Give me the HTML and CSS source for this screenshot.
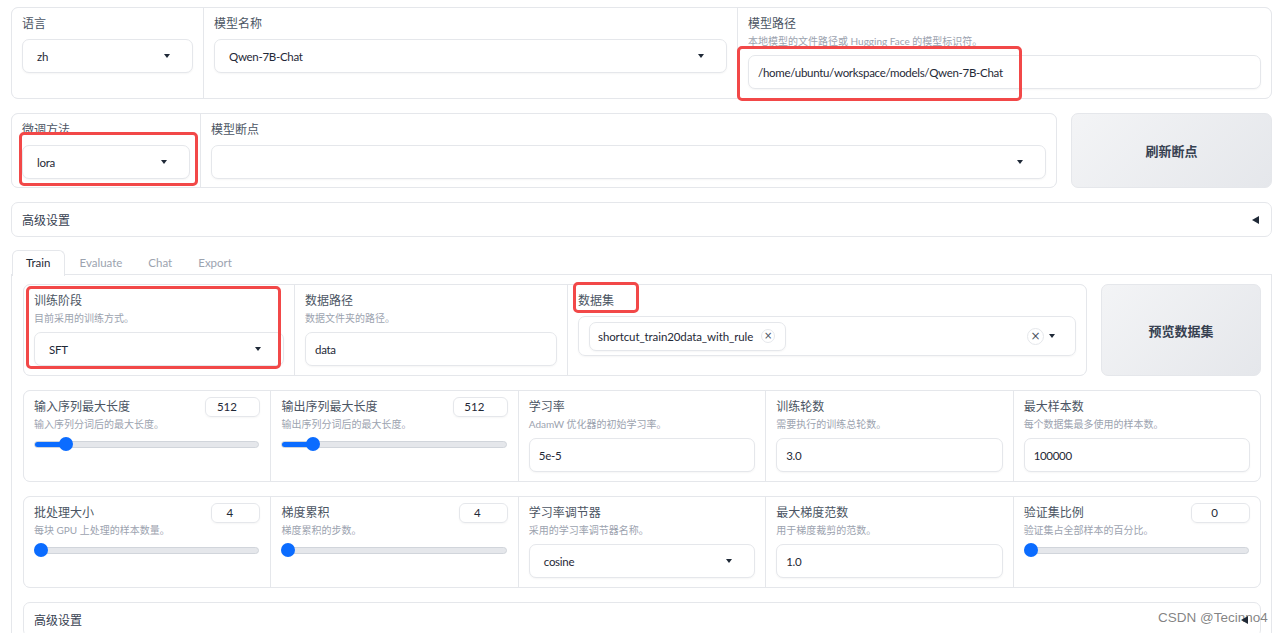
FILE: index.html
```html
<!DOCTYPE html>
<html lang="zh">
<head>
<meta charset="utf-8">
<title>LLaMA Board</title>
<link rel="stylesheet" href="styles.css">
</head>
<body>
<div class="app">
  <div class="form">
    <div class="cell c191">
      <div class="label">语言</div>
      <div class="select"><span>zh</span><i class="caret"></i></div>
    </div>
    <div class="cell grow">
      <div class="label">模型名称</div>
      <div class="select"><span>Qwen-7B-Chat</span><i class="caret"></i></div>
    </div>
    <div class="cell grow">
      <div class="label">模型路径</div>
      <div class="info">本地模型的文件路径或 Hugging Face 的模型标识符。</div>
      <div class="input">/home/ubuntu/workspace/models/Qwen-7B-Chat</div>
    </div>
  </div>

  <div class="row">
    <div class="form grow short">
      <div class="cell c188">
        <div class="label">微调方法</div>
        <div class="select"><span>lora</span><i class="caret"></i></div>
      </div>
      <div class="cell grow">
        <div class="label">模型断点</div>
        <div class="select"><span></span><i class="caret"></i></div>
      </div>
    </div>
    <button class="btn b201">刷新断点</button>
  </div>

  <div class="accordion">
    <span>高级设置</span><i class="tri"></i>
  </div>

  <div class="tabs">
    <div class="tabnav">
      <div class="tab active">Train</div>
      <div class="tab">Evaluate</div>
      <div class="tab">Chat</div>
      <div class="tab">Export</div>
    </div>
    <div class="tabpanel">
      <div class="row">
        <div class="form grow">
          <div class="cell c270">
            <div class="label">训练阶段</div>
            <div class="info">目前采用的训练方式。</div>
            <div class="select"><span>SFT</span><i class="caret"></i></div>
          </div>
          <div class="cell c272">
            <div class="label">数据路径</div>
            <div class="info">数据文件夹的路径。</div>
            <div class="input">data</div>
          </div>
          <div class="cell grow">
            <div class="label">数据集</div>
            <div class="multi">
              <div class="chip"><span>shortcut_train20data_with_rule</span><i class="x small">×</i></div>
              <div class="multi-end"><i class="x big">×</i><i class="caret"></i></div>
            </div>
          </div>
        </div>
        <button class="btn b160">预览数据集</button>
      </div>

      <div class="form">
        <div class="cell grow">
          <div class="head"><div class="label">输入序列最大长度</div><div class="num n55">512</div></div>
          <div class="info">输入序列分词后的最大长度。</div>
          <div class="slider"><div class="track"><div class="fill" style="width:calc((100% - 14px) * 0.118 + 7px)"></div></div><div class="thumb" style="left:calc((100% - 14px) * 0.118)"></div></div>
        </div>
        <div class="cell grow">
          <div class="head"><div class="label">输出序列最大长度</div><div class="num n55">512</div></div>
          <div class="info">输出序列分词后的最大长度。</div>
          <div class="slider"><div class="track"><div class="fill" style="width:calc((100% - 14px) * 0.118 + 7px)"></div></div><div class="thumb" style="left:calc((100% - 14px) * 0.118)"></div></div>
        </div>
        <div class="cell grow">
          <div class="label">学习率</div>
          <div class="info">AdamW 优化器的初始学习率。</div>
          <div class="input">5e-5</div>
        </div>
        <div class="cell grow">
          <div class="label">训练轮数</div>
          <div class="info">需要执行的训练总轮数。</div>
          <div class="input">3.0</div>
        </div>
        <div class="cell grow">
          <div class="label">最大样本数</div>
          <div class="info">每个数据集最多使用的样本数。</div>
          <div class="input">100000</div>
        </div>
      </div>

      <div class="form">
        <div class="cell grow">
          <div class="head"><div class="label">批处理大小</div><div class="num n49">4</div></div>
          <div class="info">每块 GPU 上处理的样本数量。</div>
          <div class="slider"><div class="track"><div class="fill" style="width:7px"></div></div><div class="thumb" style="left:0"></div></div>
        </div>
        <div class="cell grow">
          <div class="head"><div class="label">梯度累积</div><div class="num n49">4</div></div>
          <div class="info">梯度累积的步数。</div>
          <div class="slider"><div class="track"><div class="fill" style="width:7px"></div></div><div class="thumb" style="left:0"></div></div>
        </div>
        <div class="cell grow">
          <div class="label">学习率调节器</div>
          <div class="info">采用的学习率调节器名称。</div>
          <div class="select"><span>cosine</span><i class="caret"></i></div>
        </div>
        <div class="cell grow">
          <div class="label">最大梯度范数</div>
          <div class="info">用于梯度裁剪的范数。</div>
          <div class="input">1.0</div>
        </div>
        <div class="cell grow">
          <div class="head"><div class="label">验证集比例</div><div class="num n59">0</div></div>
          <div class="info">验证集占全部样本的百分比。</div>
          <div class="slider"><div class="track"><div class="fill" style="width:7px"></div></div><div class="thumb" style="left:0"></div></div>
        </div>
      </div>

      <div class="accordion inner">
        <span>高级设置</span><i class="tri"></i>
      </div>
    </div>
  </div>

  <div class="mark m1"></div>
  <div class="mark m2"></div>
  <div class="mark m3"></div>
  <div class="mark m4"></div>
  <div class="watermark">CSDN @Tecinno4</div>
</div>
</body>
</html>
```
FILE: styles.css
```css
* { box-sizing: border-box; }
html, body { margin: 0; padding: 0; background: #fff; overflow: hidden; }
body {
  font-family: "Lato", "Noto Sans CJK SC", sans-serif;
  font-size: 12px;
  color: #1f2937;
  height: 633px;
}
.app {
  position: relative;
  padding: 7px 8px 0 11px;
  display: flex;
  flex-direction: column;
  gap: 14px;
}
.row { display: flex; gap: 14px; align-items: stretch; }
.grow { flex: 1 1 0; min-width: 0; }
.form {
  display: flex;
  gap: 1px;
  background: #e5e7eb;
  border: 1px solid #e5e7eb;
  border-radius: 7px;
  overflow: hidden;
}
.cell {
  background: #fff;
  padding: 7px 10px 9px 10px;
  display: flex;
  flex-direction: column;
}
.short .cell { padding-bottom: 8px; }
.c191 { flex: 0 0 191px; }
.c188 { flex: 0 0 188px; }
.c270 { flex: 0 0 270px; }
.c272 { flex: 0 0 272px; }
.label {
  font-size: 12px;
  line-height: 17px;
  color: #4b5563;
  margin-bottom: 7px;
}
.info {
  font-size: 10px;
  line-height: 14px;
  color: #9ca3af;
  margin-top: -5px;
  margin-bottom: 7px;
}
.select, .input {
  height: 34px;
  border: 1px solid #e5e7eb;
  border-radius: 7px;
  box-shadow: 0 1px 2px rgba(0,0,0,0.04);
  display: flex;
  align-items: center;
  font-size: 11.5px;
  letter-spacing: -0.3px;
  color: #1f2937;
  background: #fff;
}
.select { padding: 0 22px 0 14px; justify-content: space-between; }
.input { padding: 0 9px; }
.caret {
  width: 0; height: 0;
  border-left: 3px solid transparent;
  border-right: 3px solid transparent;
  border-top: 4px solid #1f2937;
}
.btn {
  font-family: inherit;
  border: 1px solid #e5e7eb;
  border-radius: 7px;
  background: linear-gradient(135deg, #f3f4f6, #e5e7eb);
  font-size: 13px;
  font-weight: 700;
  color: #374151;
  padding: 0;
}
.b201 { flex: 0 0 201px; }
.b160 { flex: 0 0 160px; }
.accordion {
  border: 1px solid #e5e7eb;
  border-radius: 7px;
  height: 35px;
  padding: 0 12px 0 10px;
  display: flex;
  align-items: center;
  justify-content: space-between;
  font-size: 12px;
  color: #374151;
}
.tri {
  position: relative;
  z-index: 2;
  width: 0; height: 0;
  border-top: 4px solid transparent;
  border-bottom: 4px solid transparent;
  border-right: 7px solid #1f2937;
}
.tabs { margin-top: -1px; }
.tabnav {
  display: flex;
  border-bottom: 1px solid #e5e7eb;
  height: 25px;
}
.tab {
  padding: 3px 12px 3px 12px;
  line-height: 17px;
  font-size: 11.5px;
  color: #9ca3af;
  border: 1px solid transparent;
  border-bottom: none;
  height: 25px;
}
.tab.active {
  color: #1f2937;
  border-color: #e5e7eb;
  border-radius: 6px 6px 0 0;
  background: #fff;
  margin-bottom: -1px;
  height: 26px;
  padding: 3px 13px 3px 13px;
  margin-left: 1px;
  margin-right: 2px;
}
.tabpanel {
  border: 1px solid #e5e7eb;
  border-top: none;
  padding: 9px 10px 10px 11px;
  display: flex;
  flex-direction: column;
  gap: 14px;
  height: 400px;
}
.multi {
  height: 40px;
  border: 1px solid #e5e7eb;
  border-radius: 7px;
  box-shadow: 0 1px 2px rgba(0,0,0,0.04);
  display: flex;
  align-items: center;
  padding: 0 20px 0 10px;
  justify-content: space-between;
}
.chip {
  height: 29px;
  border: 1px solid #e5e7eb;
  border-radius: 7px;
  display: flex;
  align-items: center;
  padding: 0 10px 0 8px;
  gap: 8px;
  font-size: 11.5px;
  letter-spacing: -0.1px;
  color: #1f2937;
  background: #fff;
  box-shadow: 0 1px 2px rgba(0,0,0,0.04);
}
.x {
  font-style: normal;
  border: 1px solid #e5e7eb;
  border-radius: 50%;
  display: flex;
  align-items: center;
  justify-content: center;
  color: #4b5563;
  font-family: "DejaVu Sans", sans-serif;
  line-height: 1;
  letter-spacing: 0;
}
.x.small { width: 14px; height: 14px; font-size: 10px; }
.x.big { width: 17px; height: 17px; font-size: 12px; }
.multi-end { display: flex; align-items: center; gap: 5px; }
.head {
  display: flex;
  justify-content: space-between;
  align-items: center;
  height: 17px;
  margin-bottom: 7px;
}
.head .label { margin-bottom: 0; }
.num {
  height: 20px;
  border: 1px solid #e5e7eb;
  border-radius: 6px;
  box-shadow: 0 1px 2px rgba(0,0,0,0.04);
  font-size: 11.5px;
  line-height: 18px;
  text-align: center;
  padding: 0 12px 0 0;
  color: #1f2937;
}
.n55 { width: 55px; }
.n49 { width: 49px; }
.n59 { width: 59px; }
.slider {
  position: relative;
  height: 14px;
  margin-top: -1px;
  margin-right: 1px;
}
.track {
  position: absolute;
  left: 0; right: 0; top: 4px;
  height: 7px;
  border: 1px solid #d1d5db;
  background: #e5e7eb;
  border-radius: 4px;
  overflow: hidden;
}
.fill {
  height: 100%;
  background: #0b6cff;
}
.thumb {
  position: absolute;
  top: 0;
  width: 14px;
  height: 14px;
  border-radius: 50%;
  background: #0b6cff;
}
.mark {
  position: absolute;
  border: 3px solid #f24848;
  border-radius: 5px;
  pointer-events: none;
}
.m1 { left: 737px; top: 46px; width: 285px; height: 55px; }
.m2 { left: 19px; top: 132px; width: 179px; height: 54px; }
.m3 { left: 26px; top: 286px; width: 255px; height: 83px; }
.m4 { left: 573px; top: 282px; width: 66px; height: 31px; }
.watermark {
  position: absolute;
  z-index: 1;
  left: 1158px;
  top: 609px;
  font-family: "Liberation Sans", sans-serif;
  font-size: 13.5px;
  color: rgba(90, 90, 90, 0.75);
  line-height: 18px;
  white-space: nowrap;
}
```
